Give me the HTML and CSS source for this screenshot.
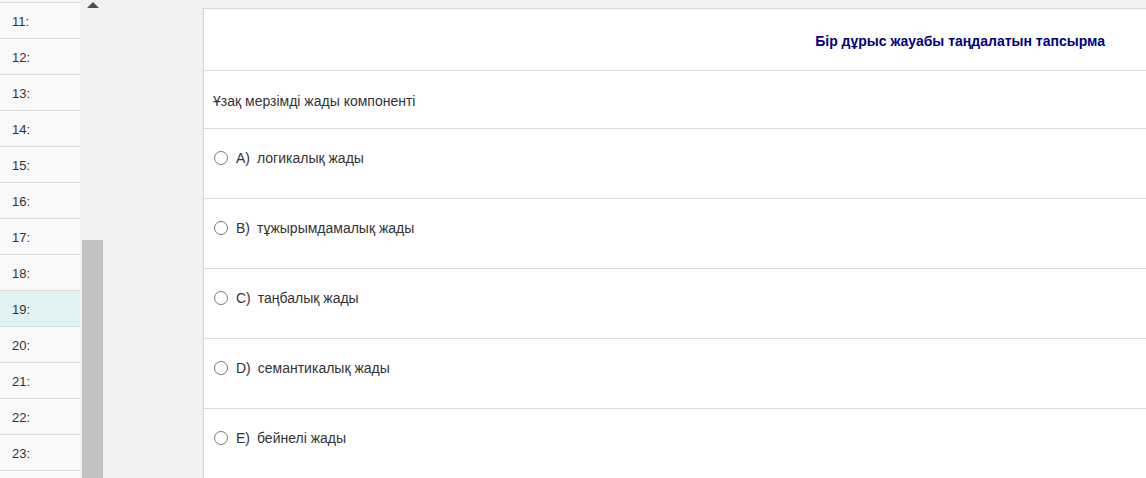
FILE: index.html
```html
<!DOCTYPE html>
<html lang="kk">
<head>
<meta charset="utf-8">
<title>Тест</title>
<link rel="stylesheet" href="styles.css">
</head>
<body>
<div class="page">
  <aside class="nav">
    <ul class="nav-list">
      <li class="nav-item">11:</li>
      <li class="nav-item">12:</li>
      <li class="nav-item">13:</li>
      <li class="nav-item">14:</li>
      <li class="nav-item">15:</li>
      <li class="nav-item">16:</li>
      <li class="nav-item">17:</li>
      <li class="nav-item">18:</li>
      <li class="nav-item active">19:</li>
      <li class="nav-item">20:</li>
      <li class="nav-item">21:</li>
      <li class="nav-item">22:</li>
      <li class="nav-item">23:</li>
    </ul>
  </aside>
  <div class="scroll">
    <span class="arrow"></span>
    <div class="thumb"></div>
  </div>
  <div class="gap"></div>
  <main class="panel">
    <header class="panel-head">
      <h1 class="title">Бір дұрыс жауабы таңдалатын тапсырма</h1>
    </header>
    <div class="question">Ұзақ мерзімді жады компоненті</div>
    <label class="option"><input type="radio" name="q" class="radio"><span class="letter">A)</span><span class="text">логикалық жады</span></label>
    <label class="option"><input type="radio" name="q" class="radio"><span class="letter">B)</span><span class="text">тұжырымдамалық жады</span></label>
    <label class="option"><input type="radio" name="q" class="radio"><span class="letter">C)</span><span class="text">таңбалық жады</span></label>
    <label class="option"><input type="radio" name="q" class="radio"><span class="letter">D)</span><span class="text">семантикалық жады</span></label>
    <label class="option"><input type="radio" name="q" class="radio"><span class="letter">E)</span><span class="text">бейнелі жады</span></label>
  </main>
</div>
</body>
</html>
```

FILE: styles.css
```css
* { box-sizing: border-box; }
html, body {
  margin: 0;
  padding: 0;
  background: #f1f1f1;
  font-family: "Liberation Sans", Arial, sans-serif;
  color: #333;
}
.page {
  display: flex;
  height: 478px;
  overflow: hidden;
}
.nav {
  width: 80px;
  flex: 0 0 80px;
  overflow: hidden;
  background: #f9f9f9;
}
.nav-list {
  list-style: none;
  margin: 2px 0 0 0;
  padding: 0;
  border-top: 1px solid #dcdcdc;
}
.nav-item {
  height: 36px;
  line-height: 35px;
  padding: 1px 0 0 12px;
  font-size: 13px;
  color: #333;
  border-bottom: 1px solid #dcdcdc;
  background: #f9f9f9;
}
.nav-item.active {
  background: #e1f2f5;
}
.scroll {
  width: 23px;
  flex: 0 0 23px;
  display: flex;
  flex-direction: column;
  background: #f1f1f1;
}
.arrow {
  display: block;
  width: 0;
  height: 0;
  margin: 2px 0 0 7px;
  border-left: 6px solid transparent;
  border-right: 6px solid transparent;
  border-bottom: 6px solid #505050;
}
.thumb {
  margin: 232px 0 0 2px;
  width: 21px;
  flex: 1;
  background: #c1c1c1;
}
.gap {
  flex: 0 0 100px;
}
.panel {
  flex: 1;
  margin-top: 8px;
  background: #fff;
  border-top: 1px solid #d8d8d8;
  border-left: 1px solid #cfcfcf;
}
.panel-head {
  height: 62px;
  display: flex;
  align-items: center;
  justify-content: flex-end;
  padding: 3px 41px 0 0;
  border-bottom: 1px solid #dedede;
}
.title {
  margin: 0;
  font-size: 14px;
  font-weight: bold;
  color: #000080;
}
.question {
  height: 58px;
  display: flex;
  align-items: center;
  padding: 2px 0 0 9px;
  font-size: 14px;
  border-bottom: 1px solid #dedede;
}
.option {
  height: 70px;
  display: flex;
  align-items: center;
  padding: 0 0 12px 9px;
  font-size: 14px;
  border-bottom: 1px solid #dedede;
}
.radio {
  width: 14px;
  height: 14px;
  margin: 0 8px 0 1px;
}
.letter {
  margin-right: 7px;
}
```
